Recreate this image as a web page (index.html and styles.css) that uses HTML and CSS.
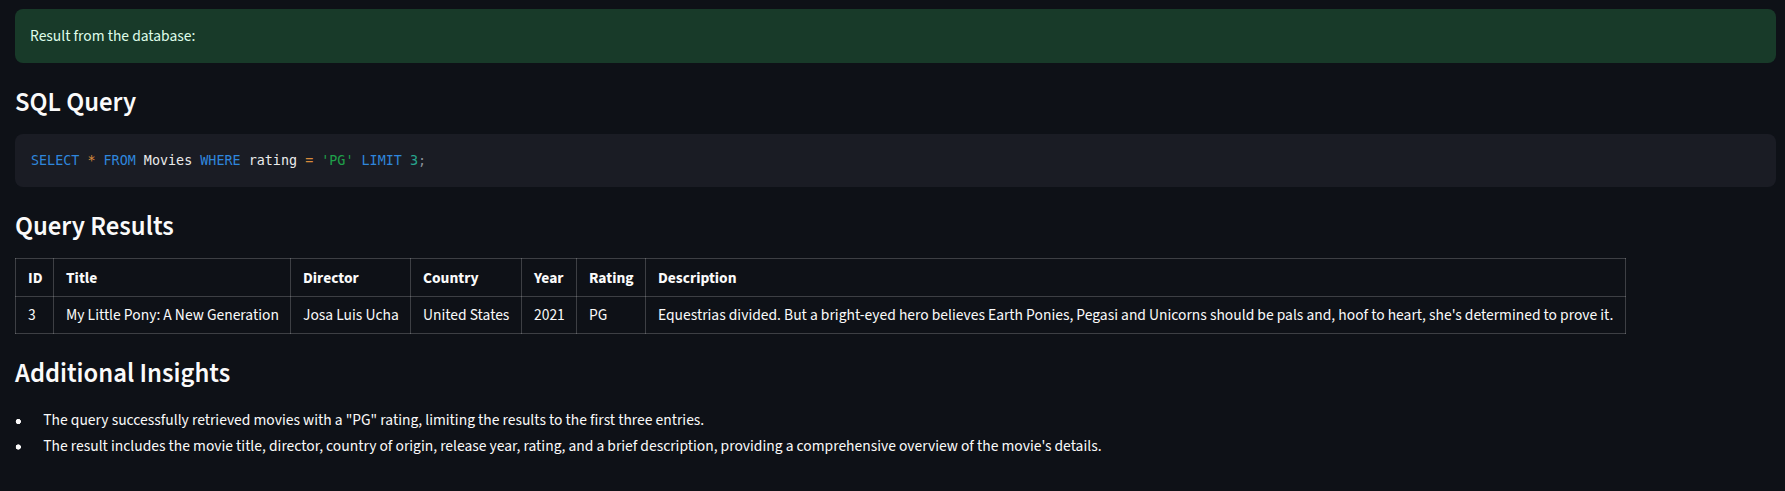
FILE: index.html
```html
<!DOCTYPE html>
<html lang="en">
<head>
<meta charset="utf-8">
<title>Query</title>
<link rel="stylesheet" href="styles.css">
</head>
<body>
<main class="app">
  <div class="alert">Result from the database:</div>
  <h3 class="heading">SQL Query</h3>
  <pre class="code"><code><span class="kw">SELECT</span> <span class="op">*</span> <span class="kw">FROM</span> Movies <span class="kw">WHERE</span> rating <span class="op">=</span> <span class="str">'PG'</span> <span class="kw">LIMIT</span> <span class="num">3</span><span class="pun">;</span></code></pre>
  <h3 class="heading">Query Results</h3>
  <table class="results">
    <colgroup>
      <col class="c-id"><col class="c-title"><col class="c-director"><col class="c-country"><col class="c-year"><col class="c-rating"><col class="c-desc">
    </colgroup>
    <thead>
      <tr><th>ID</th><th>Title</th><th>Director</th><th>Country</th><th>Year</th><th>Rating</th><th>Description</th></tr>
    </thead>
    <tbody>
      <tr><td>3</td><td>My Little Pony: A New Generation</td><td>Josa Luis Ucha</td><td>United States</td><td>2021</td><td>PG</td><td>Equestrias divided. But a bright-eyed hero believes Earth Ponies, Pegasi and Unicorns should be pals and, hoof to heart, she's determined to prove it.</td></tr>
    </tbody>
  </table>
  <h3 class="heading">Additional Insights</h3>
  <ul class="insights">
    <li>The query successfully retrieved movies with a "PG" rating, limiting the results to the first three entries.</li>
    <li>The result includes the movie title, director, country of origin, release year, rating, and a brief description, providing a comprehensive overview of the movie's details.</li>
  </ul>
</main>
</body>
</html>
```
FILE: styles.css
```css
html, body {
  margin: 0;
  background: #0e1117;
}
body {
  color: #fafafa;
  font-family: "Source Sans 3", Lato, "Liberation Sans", sans-serif;
  font-size: 15.5px;
}
.app {
  padding: 9px 9px 0 15px;
}
.alert {
  background: #183a29;
  color: #dffde9;
  border-radius: 8px;
  padding: 14.5px 15px 15.5px;
  line-height: 24px;
}
.heading {
  margin: 22px 0 13px;
  font-size: 26.7px;
  font-weight: 600;
  line-height: 36px;
}
.code {
  margin: 0;
  background: #1a1c24;
  border-radius: 8px;
  padding: 16px;
  font-family: "DejaVu Sans Mono", "Liberation Mono", monospace;
  font-size: 13.4px;
  line-height: 21px;
  color: #ebebeb;
}
.code code {
  font: inherit;
}
.kw { color: #2f86dc; }
.op { color: #d98a3b; }
.str { color: #1fa04a; }
.num { color: #27a58e; }
.pun { color: #8a8f98; }
.results {
  border-collapse: collapse;
  table-layout: fixed;
  width: 1610px;
}
.c-id { width: 38px; }
.c-title { width: 237px; }
.c-director { width: 120px; }
.c-country { width: 111px; }
.c-year { width: 55px; }
.c-rating { width: 69px; }
.c-desc { width: 980px; }
.results th, .results td {
  border: 1px solid rgba(250, 250, 250, 0.2);
  text-align: left;
  white-space: nowrap;
  overflow: hidden;
  padding: 0 12px;
}
.results th {
  font-weight: 700;
  height: 37.4px;
}
.results td {
  height: 35.8px;
}
.insights {
  list-style: none;
  margin: 16px 0 0;
  padding: 0;
}
.insights li {
  display: flex;
  line-height: 25.6px;
}
.insights li::before {
  content: "";
  flex: 0 0 28.3px;
  background: radial-gradient(circle at 3.3px 52%, currentColor 2.3px, transparent 2.9px) no-repeat;
}
```
